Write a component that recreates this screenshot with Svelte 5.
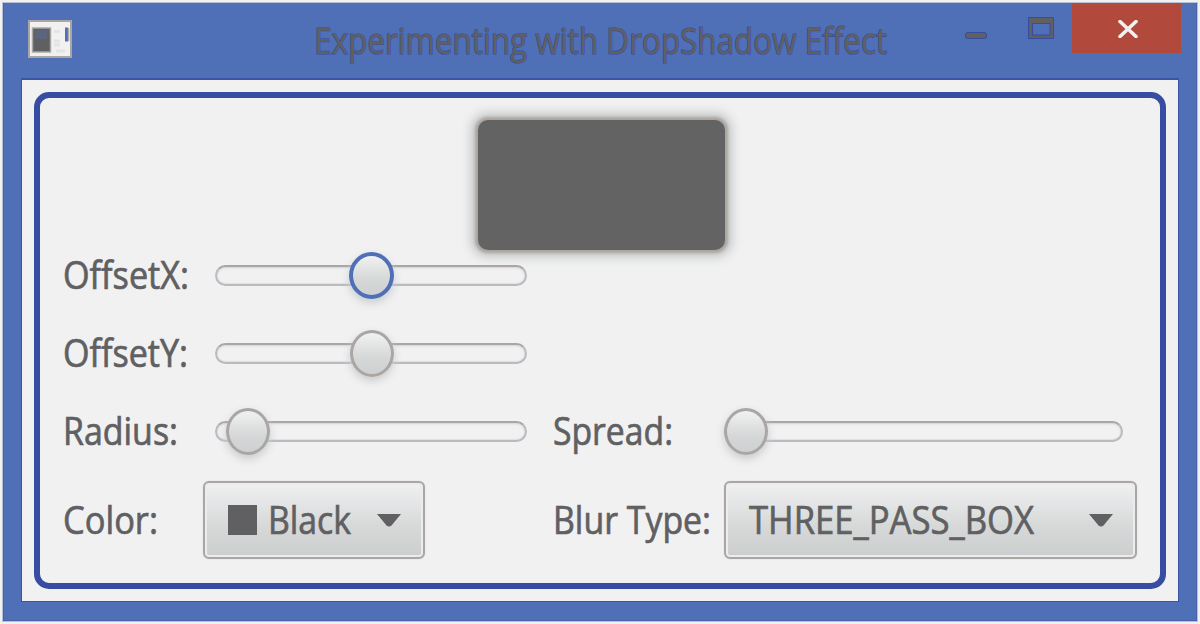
<script>
  const rows = [
    { label: 'OffsetX:', width: 126, thumb: 132, focused: true, height: 50 },
    { label: 'OffsetY:', width: 125, thumb: 133, focused: false, height: 78 },
  ];
</script>

{#snippet caption(text, width, size = 38)}
  <svg class="caption" {width} height="50">
    <text x="-1" y="39" font-size={size} textLength={width} lengthAdjust="spacingAndGlyphs">{text}</text>
  </svg>
{/snippet}

{#snippet slider(thumb, focused, width)}
  <div class="slider" style:width="{width}px">
    <span class="thumb" class:focused style:left="{thumb}px"></span>
  </div>
{/snippet}

{#snippet arrow()}
  <svg class="arrow" width="26" height="15"><path d="M1 1H25L15.500 12.500Q13 14.500 10.500 12.500Z" /></svg>
{/snippet}

<div class="window">
  <header>
    <svg class="app-icon" width="44" height="38">
      <rect x="1" y="1" width="42" height="36" fill="#f1f1f2" stroke="#aaa6a3" stroke-width="2" />
      <rect x="4.500" y="8" width="18" height="24" fill="#606062" stroke="#aaa6a3" stroke-width="1.500" />
      <rect x="7" y="10" width="12" height="9" fill="#4f70b7" opacity=".3" />
      <path d="M26 11.500h6M26 21h6M26 25h6M28 31h9" stroke="#e3e4e5" stroke-width="3" />
      <path d="M38.500 7.500v14" stroke="#4f70b7" stroke-width="3" />
      <path d="M40.500 8v13" stroke="#aaa6a3" stroke-width="1.500" />
    </svg>
    <div class="title">{@render caption('Experimenting with DropShadow Effect', 573, 36)}</div>
    <div class="controls">
      <svg class="min" width="22" height="8"><rect x=".5" y=".5" width="21" height="6" rx="2" fill="#606062" stroke="#354ca0" /></svg>
      <svg class="max" width="26" height="22">
        <path fill-rule="evenodd" d="M.5 .5H25.500V21.500H.5ZM4.500 6.500V18H22V6.500Z" fill="#606062" stroke="#354ca0" />
      </svg>
      <div class="close">
        <svg width="20" height="18"><path d="M2 1.500L18 16.500M18 1.500L2 16.500" stroke="#f1f1f2" stroke-width="3.600" stroke-linecap="round" /></svg>
      </div>
    </div>
  </header>
  <main>
    <section class="panel">
      <div class="sample"></div>
      {#each rows as r}
        <div class="row" style:height="{r.height}px">
          <div class="key">{@render caption(r.label, r.width)}</div>
          {@render slider(r.thumb, r.focused, 312)}
        </div>
      {/each}
      <div class="row">
        <div class="key">{@render caption('Radius:', 115)}</div>
        {@render slider(9, false, 312)}
        <div class="key second">{@render caption('Spread:', 120)}</div>
        {@render slider(-2, false, 399)}
      </div>
      <div class="row last">
        <div class="key">{@render caption('Color:', 95)}</div>
        <div class="combo color">
          <span class="swatch"></span>
          {@render caption('Black', 83)}
          {@render arrow()}
        </div>
        <div class="key second">{@render caption('Blur Type:', 158)}</div>
        <div class="combo blur">
          {@render caption('THREE_PASS_BOX', 285)}
          {@render arrow()}
        </div>
      </div>
    </section>
  </main>
</div>

<style>
  :global(body) { background: #f1f1f2; }
  :global(#app) { display: flow-root; height: 624px; }
  .window {
    box-sizing: border-box;
    width: 1194px;
    height: 618px;
    margin: 3px;
    padding: 0 18px;
    background: #4f70b7;
    box-shadow: 0 0 0 1px #b9c0d2, inset 1px 0 #4964ad, inset -1px -1px #4964ad;
    font-family: "Open Sans", "Noto Sans", sans-serif;
    font-variant-ligatures: none;
  }
  svg { display: block; flex: none; }
  .caption { overflow: visible; fill: #606062; stroke: #606062; stroke-width: .7px; }
  header { display: flex; height: 75px; }
  .app-icon { margin: 17px 0 0 7px; }
  .title { margin: 12px 0 0 243px; }
  .title :global(.caption) { stroke: #354ca0; stroke-width: 1.2px; paint-order: stroke; }
  .controls { display: flex; margin-left: 77px; }
  .min { margin-top: 29px; }
  .max { margin: 14px 18px 0 41px; }
  .close {
    display: flex;
    align-items: center;
    justify-content: center;
    width: 109px;
    height: 50px;
    padding: 2px 0 0 2px;
    box-sizing: border-box;
    background: #b1493d;
    flex: none;
  }
  main {
    box-sizing: border-box;
    height: 524px;
    padding: 12px;
    border: 1px solid #3b54a5;
    border-width: 2px 1px 1px;
    background: #f1f1f2;
  }
  .panel {
    box-sizing: border-box;
    height: 497px;
    padding: 22px 0 0 24px;
    border: 6px solid #364da1;
    border-radius: 15px;
  }
  .sample {
    width: 247px;
    height: 130px;
    margin-left: 414px;
    border-radius: 10px;
    background: #646364;
    box-shadow: 0 0 3px 3px #aaa49f, 0 0 10px 8px #c9cccc;
  }
  .row { display: flex; align-items: center; height: 78px; }
  .row:nth-child(3) { margin-top: 14px; }
  .last { margin-top: 11px; }
  .key { width: 151px; flex: none; }
  .second { width: 170px; margin-left: 27px; }
  .last .second { margin-left: 129px; }
  .slider {
    box-sizing: border-box;
    height: 21px;
    border: 2px solid #babbc0;
    border-top-color: #aaa6a3;
    border-radius: 11px;
    box-shadow: inset 0 1px 2px #d1d3d4, inset 0 -1px 1px #e0e1e2;
    position: relative;
    flex: none;
  }
  .thumb {
    position: absolute;
    top: -15px;
    box-sizing: border-box;
    width: 44px;
    height: 47px;
    border: 3px solid #aaa6a3;
    border-radius: 50%;
    background: linear-gradient(#f1f1f2, #d5d8d7 60%, #ced0d2);
    box-shadow: 0 4px 8px #c9cccd;
  }
  .focused { width: 45px; border: 4px solid #4f70b7; }
  .combo {
    display: flex;
    align-items: center;
    box-sizing: border-box;
    height: 78px;
    border: 2px solid #aaa6a3;
    border-radius: 6px;
    background: linear-gradient(#f0f0f1, #d7d9d9 58%, #cbcdce);
    box-shadow: 0 0 1px #b4bad0, inset 0 0 0 2px #ececee;
    flex: none;
  }
  .color { width: 222px; margin-left: -12px; padding-left: 23px; }
  .color .arrow { margin-left: 24px; }
  .swatch { width: 29px; height: 30px; margin-right: 12px; background: #606062; }
  .blur { width: 413px; padding-left: 24px; }
  .blur .arrow { margin-left: 53px; }
  .arrow { fill: #606062; }
</style>
